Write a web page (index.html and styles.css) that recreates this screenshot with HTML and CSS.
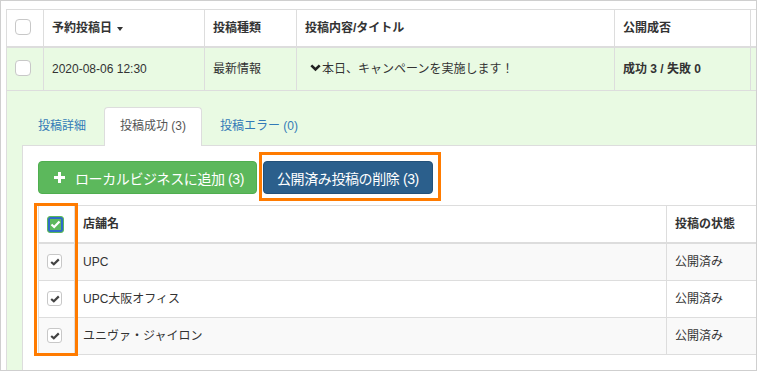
FILE: index.html
```html
<!DOCTYPE html>
<html lang="ja">
<head>
    <meta charset="UTF-8">
    <title>予約投稿</title>
    <link rel="stylesheet" href="styles.css">
</head>
<body>
    <div class="frame">
        <table class="posts">
            <colgroup>
                <col class="c-check">
                <col class="c-date">
                <col class="c-type">
                <col class="c-title">
                <col class="c-result">
                <col>
            </colgroup>
            <thead>
                <tr>
                    <th><span class="cb"></span></th>
                    <th>予約投稿日<span class="caret"></span></th>
                    <th>投稿種類</th>
                    <th>投稿内容/タイトル</th>
                    <th>公開成否</th>
                    <th></th>
                </tr>
            </thead>
            <tbody>
                <tr class="selected">
                    <td><span class="cb"></span></td>
                    <td>2020-08-06 12:30</td>
                    <td>最新情報</td>
                    <td><svg class="chevron" width="11" height="8" viewBox="0 0 11 8"><polyline points="1.3,1.3 5.5,5.5 9.7,1.3" fill="none" stroke="#222" stroke-width="2.6"/></svg>本日、キャンペーンを実施します！</td>
                    <td><b>成功 3 / 失敗 0</b></td>
                    <td></td>
                </tr>
                <tr class="detail">
                    <td colspan="6">
                        <ul class="tabs">
                            <li><a href="#">投稿詳細</a></li>
                            <li class="active"><a href="#">投稿成功 (3)</a></li>
                            <li><a href="#">投稿エラー (0)</a></li>
                        </ul>
                        <div class="tab-panel">
                            <div class="actions">
                                <button class="btn btn-add"><svg class="plus" width="11" height="11" viewBox="0 0 11 11"><rect x="4" y="0" width="3" height="11" fill="#fff"/><rect x="0" y="4" width="11" height="3" fill="#fff"/></svg>ローカルビジネスに追加 (3)</button>
                                <button class="btn btn-remove">公開済み投稿の削除 (3)</button>
                            </div>
                            <table class="stores">
                                <colgroup>
                                    <col class="s-check">
                                    <col class="s-name">
                                    <col>
                                </colgroup>
                                <thead>
                                    <tr>
                                        <th><span class="cb cb-all"><svg width="11" height="9" viewBox="0 0 11 9"><polyline points="1.5,4.5 4.2,7 9.5,1.5" fill="none" stroke="#fff" stroke-width="2.2"/></svg></span></th>
                                        <th>店舗名</th>
                                        <th>投稿の状態</th>
                                    </tr>
                                </thead>
                                <tbody>
                                    <tr>
                                        <td><span class="cb cb-on"><svg width="10" height="8" viewBox="0 0 10 8"><polyline points="1.2,4 3.8,6.3 8.8,1.4" fill="none" stroke="#444" stroke-width="2.2"/></svg></span></td>
                                        <td>UPC</td>
                                        <td>公開済み</td>
                                    </tr>
                                    <tr>
                                        <td><span class="cb cb-on"><svg width="10" height="8" viewBox="0 0 10 8"><polyline points="1.2,4 3.8,6.3 8.8,1.4" fill="none" stroke="#444" stroke-width="2.2"/></svg></span></td>
                                        <td>UPC大阪オフィス</td>
                                        <td>公開済み</td>
                                    </tr>
                                    <tr>
                                        <td><span class="cb cb-on"><svg width="10" height="8" viewBox="0 0 10 8"><polyline points="1.2,4 3.8,6.3 8.8,1.4" fill="none" stroke="#444" stroke-width="2.2"/></svg></span></td>
                                        <td>ユニヴァ・ジャイロン</td>
                                        <td>公開済み</td>
                                    </tr>
                                </tbody>
                            </table>
                        </div>
                    </td>
                </tr>
            </tbody>
        </table>
        <!-- annotation boxes -->
        <div class="mark mark-btn"></div>
        <div class="mark mark-col"></div>
    </div>
</body>
</html>
```

FILE: styles.css
```css
body {
    margin: 0;
    padding: 0;
    font-family: "Liberation Sans", "Noto Sans CJK JP", sans-serif;
    font-size: 12px;
    color: #333;
}
.frame {
    position: relative;
    box-sizing: border-box;
    width: 757px;
    height: 371px;
    border: 1px solid #cfcfcf;
    padding: 8px 0 0 5px;
    overflow: hidden;
    background: #fff;
}
table {
    border-collapse: collapse;
    table-layout: fixed;
}
.posts {
    width: 820px;
}
.c-check { width: 37px; }
.c-date { width: 161px; }
.c-type { width: 92px; }
.c-title { width: 318px; }
.c-result { width: 136px; }
.posts th,
.posts td {
    border: 1px solid #ddd;
    padding: 8px;
    line-height: 20px;
    text-align: left;
    white-space: nowrap;
}
.posts > thead th {
    border-bottom: 2px solid #ddd;
    font-weight: bold;
}
.posts > tbody > .selected > td {
    background: #e9fae3;
    padding-top: 11px;
    padding-bottom: 11px;
}
.posts .selected b {
    font-weight: bold;
}
.cb {
    display: inline-block;
    box-sizing: border-box;
    width: 16px;
    height: 16px;
    border: 1px solid #c8c8c8;
    border-radius: 4px;
    background: #fff;
    vertical-align: middle;
    position: relative;
    top: -2px;
}
.caret {
    display: inline-block;
    width: 0;
    height: 0;
    margin-left: 5px;
    border-top: 4px solid #333;
    border-left: 3px solid transparent;
    border-right: 3px solid transparent;
    vertical-align: middle;
}
.chevron {
    margin-left: 5px;
    margin-right: 1px;
    vertical-align: 1px;
}
.posts > tbody > .detail > td {
    background: #e9fae3;
    padding: 16px 15px 15px 15px;
}
.tabs {
    list-style: none;
    margin: 0;
    padding: 0;
    display: flex;
    position: relative;
    z-index: 1;
    margin-bottom: -1px;
}
.tabs li {
    margin-right: 2px;
}
.tabs a {
    display: block;
    padding: 10px 15px;
    line-height: 17px;
    border: 1px solid transparent;
    border-bottom: none;
    border-radius: 4px 4px 0 0;
    color: #337ab7;
    text-decoration: none;
}
.tabs .active a {
    background: #fff;
    border-color: #ddd;
    color: #555;
    padding-bottom: 11px;
}
.tab-panel {
    background: #fff;
    border: 1px solid #ddd;
    padding: 15px;
}
.actions {
    display: flex;
    gap: 6px;
    margin-bottom: 11px;
}
.btn {
    display: flex;
    align-items: center;
    box-sizing: border-box;
    height: 33px;
    padding: 0 13px;
    border: 1px solid transparent;
    border-radius: 4px;
    font-family: "Liberation Sans", "Noto Sans CJK JP", sans-serif;
    font-size: 14px;
    letter-spacing: -0.4px;
    color: #fff;
}
.btn-add {
    background: #5cb85c;
    border-color: #4fae4f;
    padding: 0 12px 0 15px;
}
.plus {
    margin-right: 10px;
}
.btn-remove {
    background: #2b5f8c;
    border-color: #23517a;
}
.stores {
    width: 100%;
}
.s-check { width: 36px; }
.s-name { width: 592px; }
.stores th,
.stores td {
    border: 1px solid #ddd;
    padding: 8px;
    line-height: 20px;
    text-align: left;
    white-space: nowrap;
}
.stores thead th {
    border-bottom: 2px solid #ddd;
    font-weight: bold;
}
.stores tbody tr:nth-child(odd) td {
    background: #f9f9f9;
}
.stores th:first-child,
.stores td:first-child {
    text-align: center;
    padding: 8px 0;
}
.stores .cb {
    width: 15px;
    height: 15px;
    border-radius: 3px;
    display: inline-flex;
    align-items: center;
    justify-content: center;
    top: -1px;
    left: -2px;
}
.stores .cb-all {
    width: 17px;
    height: 17px;
    border: 1px solid #5cb85c;
    background: #5cb85c;
    box-shadow: inset 0 0 0 2px #2f6bc9;
    top: 0;
    left: -1px;
}
.mark {
    position: absolute;
    box-sizing: border-box;
    border: 3px solid #ff7b00;
}
.mark-btn {
    left: 258px;
    top: 151px;
    width: 182px;
    height: 49px;
}
.mark-col {
    left: 33px;
    top: 202px;
    width: 44px;
    height: 153px;
}
```
